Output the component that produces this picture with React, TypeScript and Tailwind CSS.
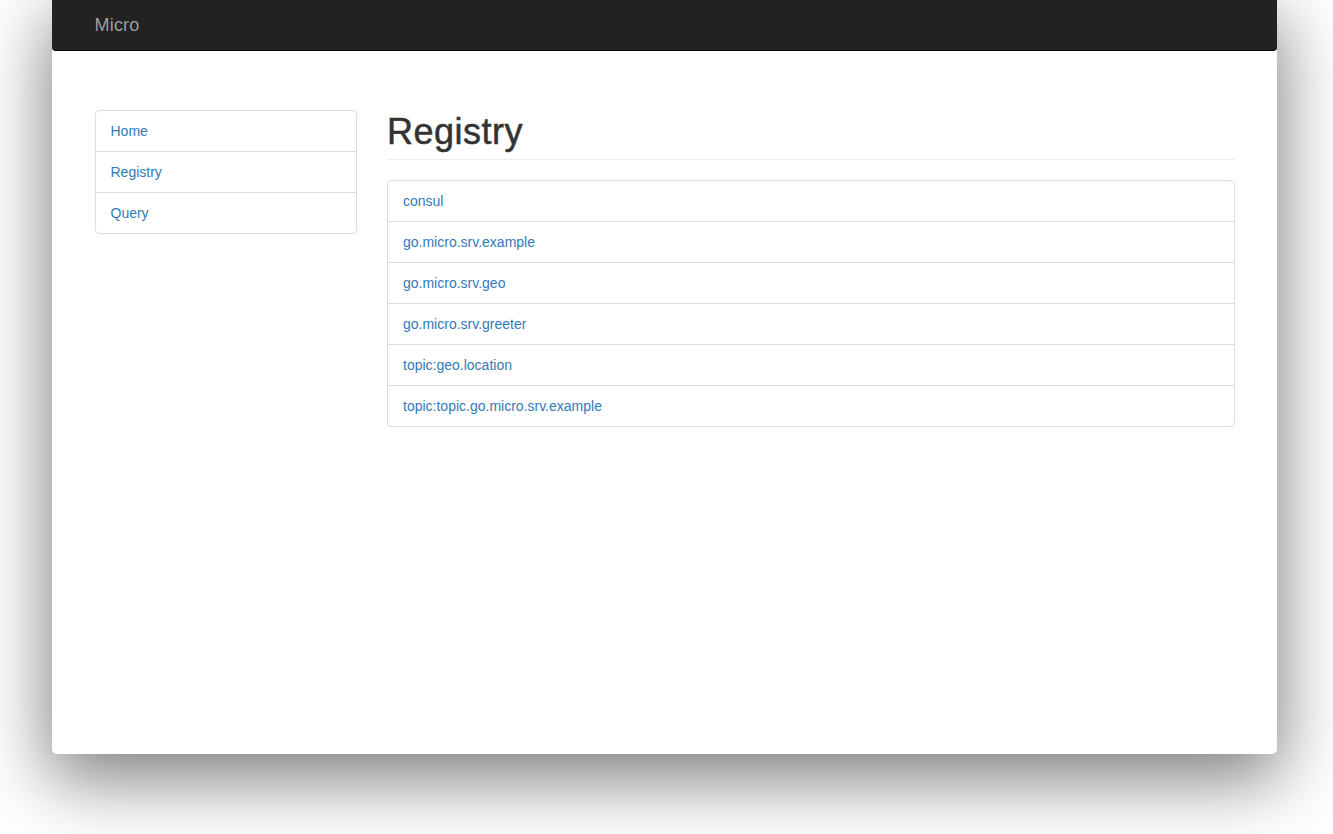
const sidebar = ["Home", "Registry", "Query"];

const services = [
  "consul",
  "go.micro.srv.example",
  "go.micro.srv.geo",
  "go.micro.srv.greeter",
  "topic:geo.location",
  "topic:topic.go.micro.srv.example",
];

function ListGroup({ items }: { items: string[] }) {
  return (
    <div className="rounded-[4px] border border-[#ddd] bg-white">
      {items.map((item, i) => (
        <a
          key={item}
          href="#"
          className={`block px-[15px] py-[10px] text-[14px] leading-[20px] text-[#337ab7] ${
            i > 0 ? "border-t border-[#ddd]" : ""
          }`}
        >
          {item}
        </a>
      ))}
    </div>
  );
}

export default function App() {
  return (
    <div
      className="h-[834px] w-[1333px] overflow-hidden bg-white"
      style={{ fontFamily: '"Liberation Sans", Arial, sans-serif' }}
    >
      {/* Window */}
      <div className="ml-[52px] h-[754px] w-[1225px] rounded-b-[5px] bg-white shadow-[0_22px_70px_4px_rgba(0,0,0,0.5)]">
        {/* Navbar */}
        <nav className="h-[51px] rounded-b-[4px] border-b border-[#080808] bg-[#222]">
          <div className="mx-auto w-[1170px] px-[15px]">
            <a
              href="#"
              className="block pt-[15px] text-[18px] leading-[20px] tracking-[0.2px] text-[#9d9d9d]"
            >
              Micro
            </a>
          </div>
        </nav>

        {/* Content */}
        <div className="mx-auto mt-[59px] flex w-[1170px]">
          <aside className="w-[292.5px] px-[15px]">
            <ListGroup items={sidebar} />
          </aside>
          <main className="w-[877.5px] px-[15px]">
            <div className="mb-[20px] border-b border-[#eee] pt-[2px] pb-[7px]">
              <h1 className="text-[36px] font-medium leading-[40px] tracking-[0.5px] text-[#333] [-webkit-text-stroke:0.5px_#333]">
                Registry
              </h1>
            </div>
            <ListGroup items={services} />
          </main>
        </div>
      </div>
    </div>
  );
}
